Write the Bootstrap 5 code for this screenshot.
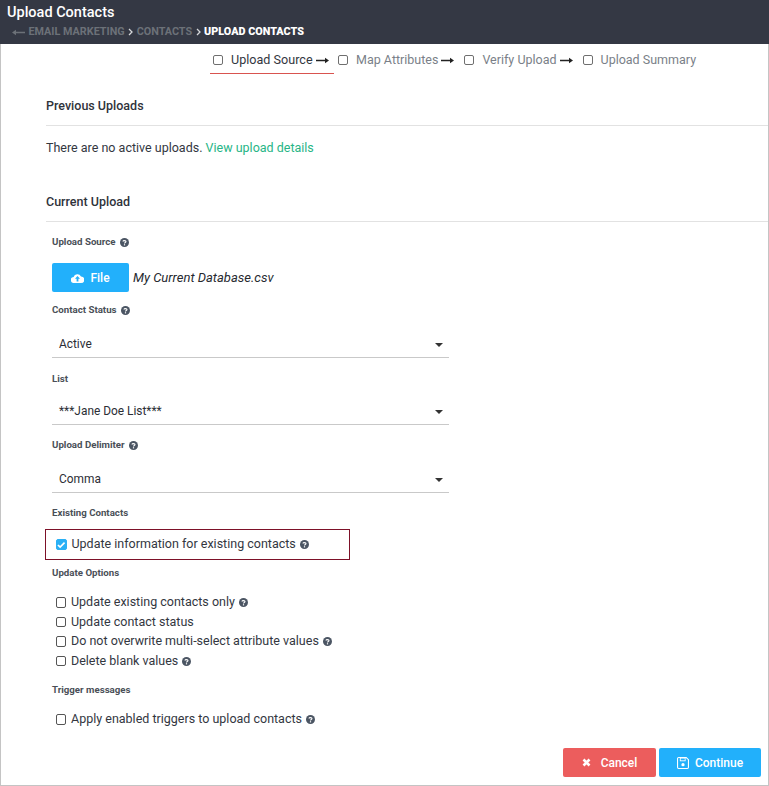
<!DOCTYPE html>
<html lang="en"><head><meta charset="utf-8"><title>Upload Contacts</title>
<link href="https://cdn.jsdelivr.net/npm/bootstrap@5.3.0/dist/css/bootstrap.min.css" rel="stylesheet">
<style>
html,body{height:786px;overflow:hidden;background:#fff}
body{font-family:Roboto,"Liberation Sans",sans-serif;font-size:12.5px;color:#33373f}
.shell{height:786px;border-left:1px solid #c4c4c4;border-right:1px solid #c4c4c4;border-bottom:1px solid #c4c4c4;display:flex;flex-direction:column}
.topbar{height:44px;margin:0 -1px;background:#343844;color:#fff;padding:4px 0 0 7px;flex:none}
.topbar h1{font-size:14.5px;font-weight:500;line-height:18px;margin:0}
.crumbs{font-size:10.8px;font-weight:700;line-height:14px;margin:3px 0 0 5px;color:#6c7178;gap:3.5px;display:flex;align-items:center;white-space:nowrap}
.crumbs b{color:#fff}
.crumbs svg{flex:none}
.stepper{height:31px;padding-left:209px;flex:none;color:#7a7f88}
.stepitem{display:flex;align-items:center;height:30px;padding:2px 0 0 3px;white-space:nowrap;font-size:12.5px}
.stepitem.now{color:#33373f;border-bottom:1px solid #d9534f;width:124px;padding-top:3px;font-size:12.6px}
.stepbox{width:10px;height:10px;border:1px solid #6f6f6f;border-radius:2px;margin-right:8px;flex:none;background:#fff}
.steparrow{margin-left:3px;flex:none}
.stepsecond{margin-left:1px}
.stepnext{margin-left:7px}
.secthead{font-size:12.5px;font-weight:500;color:#2f333b;margin-left:45px;border-bottom:1px solid #e2e2e2;line-height:16px}
.prevhead{margin-top:23px;padding-bottom:11px}
.curhead{margin-top:38px;padding-bottom:11px}
.notice{margin:13px 0 0 45px;line-height:17px;font-size:12.5px}
.notice a{color:#27b586;text-decoration:none}
.formarea{padding-left:51px}
.flabel{font-size:9.7px;font-weight:700;color:#4a4f57;line-height:12px;display:flex;align-items:center;gap:4px;margin:0}
.firstlabel{margin-top:14px}
.help{flex:none}
.uploadrow{display:flex;align-items:center;margin-top:15px;height:29px}
.filebtn,.cancelbtn,.contbtn{border:0;border-radius:2px;color:#fff;font-weight:500;font-size:12px;display:flex;align-items:center;justify-content:center;padding:0}
.filebtn{width:77px;height:29px;background:#22b0fb;gap:6px}
.fname{font-style:italic;margin-left:4px;font-size:13px;color:#26292f}
.fakeselect{width:397px;height:29px;border-bottom:1px solid #c9c9c9;display:flex;align-items:center;justify-content:space-between;padding:3px 6px 0 7px;font-size:11.9px;color:#2b2e35;margin-top:13px}
.selectmid{margin-top:11px}
.caret{width:0;height:0;border-left:4px solid transparent;border-right:4px solid transparent;border-top:4px solid #333}
.checkline{display:flex;align-items:center;height:19.6px;font-size:12.5px;white-space:nowrap;color:#33373f;padding-left:3.5px}
.tick{width:10.5px;height:10.5px;border:1px solid #555;border-radius:2px;background:#fff;margin-right:5px;flex:none;display:flex;align-items:center;justify-content:center}
.tick.on{background:#2ab0f5;border-color:#2ab0f5}
.checkline .help,.framed .help{margin-left:4px}
.framed{border:1px solid #7d1128;width:305px;height:31px;margin:10px 0 0 -7px;padding-left:10px;display:flex;align-items:center;font-size:12.5px}
.lab-a{margin-top:12px}.lab-b{margin-top:15px}.lab-c{margin-top:14px}.lab-d{margin-top:7px}.lab-e{margin-top:13.5px}
.opts{margin-top:13.5px}
.actions{display:flex;justify-content:flex-end;gap:3px;padding-right:7px;margin-top:auto;margin-bottom:8px}
.cancelbtn{width:93px;height:29px;background:#ec5d5d;gap:10px}
.contbtn{width:102px;height:29px;background:#22b0fb;gap:6px}
</style></head>
<body>
<svg width="0" height="0" class="d-block position-absolute"><defs>
<symbol id="qmark" viewBox="0 0 9 9"><circle cx="4.5" cy="4.5" r="4.5" fill="#4b5563"/><path d="M3 3.5C3 2.4 6 2.3 6 3.6 6 4.6 4.5 4.5 4.5 5.6" fill="none" stroke="#fff" stroke-width="1.1"/><rect x="3.9" y="6.2" width="1.2" height="1.2" fill="#fff"/></symbol>
<symbol id="rarrow" viewBox="0 0 13 7"><path d="M13 3.5 9 .8v1.9H0v1.6h9v1.9z" fill="#222"/></symbol>
</defs></svg>
<div class="shell">
 <div class="topbar">
  <h1>Upload Contacts</h1>
  <div class="crumbs">
   <svg width="13" height="7" viewBox="0 0 13 7"><path d="M0 3.5 4 .8v1.9h9v1.6H4v1.9z" fill="#6c7178"/></svg>
   <span>EMAIL MARKETING</span>
   <svg width="5" height="8" viewBox="0 0 5 8"><path d="M1 1l3 3-3 3" fill="none" stroke="#d5d7da" stroke-width="1.3"/></svg>
   <span>CONTACTS</span>
   <svg width="5" height="8" viewBox="0 0 5 8"><path d="M1 1l3 3-3 3" fill="none" stroke="#d5d7da" stroke-width="1.3"/></svg>
   <b>UPLOAD CONTACTS</b>
  </div>
 </div>
 <div class="stepper d-flex">
  <div class="stepitem now"><span class="stepbox"></span>Upload Source<svg class="steparrow" width="13" height="7"><use href="#rarrow"/></svg></div>
  <div class="stepitem stepsecond"><span class="stepbox"></span>Map Attributes<svg class="steparrow" width="13" height="7"><use href="#rarrow"/></svg></div>
  <div class="stepitem stepnext"><span class="stepbox"></span>Verify Upload<svg class="steparrow" width="13" height="7"><use href="#rarrow"/></svg></div>
  <div class="stepitem stepnext"><span class="stepbox"></span>Upload Summary</div>
 </div>
 <div class="secthead prevhead">Previous Uploads</div>
 <div class="notice">There are no active uploads. <a href="#">View upload details</a></div>
 <div class="secthead curhead">Current Upload</div>
 <div class="formarea">
  <div class="flabel firstlabel">Upload Source <svg class="help" width="9" height="9"><use href="#qmark"/></svg></div>
  <div class="uploadrow">
   <button class="filebtn" type="button"><svg width="13" height="10" viewBox="0 0 13 10"><path d="M3 10A3 3 0 0 1 2.6 4 4 4 0 0 1 10 3.4 3.3 3.3 0 0 1 10 10z" fill="#fff"/><path d="M6.5 3 4 5.8h1.6V8.5h1.8V5.8H9z" fill="#22b0fb"/></svg>File</button>
   <span class="fname">My Current Database.csv</span>
  </div>
  <div class="flabel lab-a">Contact Status <svg class="help" width="9" height="9"><use href="#qmark"/></svg></div>
  <div class="fakeselect"><span>Active</span><i class="caret"></i></div>
  <div class="flabel lab-b">List</div>
  <div class="fakeselect selectmid"><span>***Jane Doe List***</span><i class="caret"></i></div>
  <div class="flabel lab-c">Upload Delimiter <svg class="help" width="9" height="9"><use href="#qmark"/></svg></div>
  <div class="fakeselect"><span>Comma</span><i class="caret"></i></div>
  <div class="flabel lab-c">Existing Contacts</div>
  <div class="framed"><span class="tick on"><svg width="9" height="8" viewBox="0 0 9 8"><path d="M1 4l2.3 2.3L8 1.5" fill="none" stroke="#fff" stroke-width="1.7"/></svg></span>Update information for existing contacts<svg class="help" width="9" height="9"><use href="#qmark"/></svg></div>
  <div class="flabel lab-d">Update Options</div>
  <div class="opts">
   <div class="checkline"><span class="tick"></span>Update existing contacts only<svg class="help" width="9" height="9"><use href="#qmark"/></svg></div>
   <div class="checkline"><span class="tick"></span>Update contact status</div>
   <div class="checkline"><span class="tick"></span>Do not overwrite multi-select attribute values<svg class="help" width="9" height="9"><use href="#qmark"/></svg></div>
   <div class="checkline"><span class="tick"></span>Delete blank values<svg class="help" width="9" height="9"><use href="#qmark"/></svg></div>
  </div>
  <div class="flabel lab-e">Trigger messages</div>
  <div class="opts"><div class="checkline"><span class="tick"></span>Apply enabled triggers to upload contacts<svg class="help" width="9" height="9"><use href="#qmark"/></svg></div></div>
 </div>
 <div class="actions">
  <button class="cancelbtn" type="button"><svg width="9" height="9" viewBox="0 0 9 9"><path d="M1.5 1.5l6 6M7.5 1.5l-6 6" stroke="#fff" stroke-width="2.6"/></svg>Cancel</button>
  <button class="contbtn" type="button"><svg width="12" height="12" viewBox="0 0 11 11"><path d="M1.5.5h7l2 2v7a1 1 0 0 1-1 1h-8a1 1 0 0 1-1-1v-8a1 1 0 0 1 1-1z" fill="none" stroke="#fff"/><rect x="3" y="1" width="4.5" height="2.5" fill="none" stroke="#fff" stroke-width=".8"/><circle cx="5.5" cy="7" r="1.5" fill="#fff"/></svg>Continue</button>
 </div>
</div>
<script src="https://cdn.jsdelivr.net/npm/bootstrap@5.3.0/dist/js/bootstrap.bundle.min.js"></script>
</body></html>
